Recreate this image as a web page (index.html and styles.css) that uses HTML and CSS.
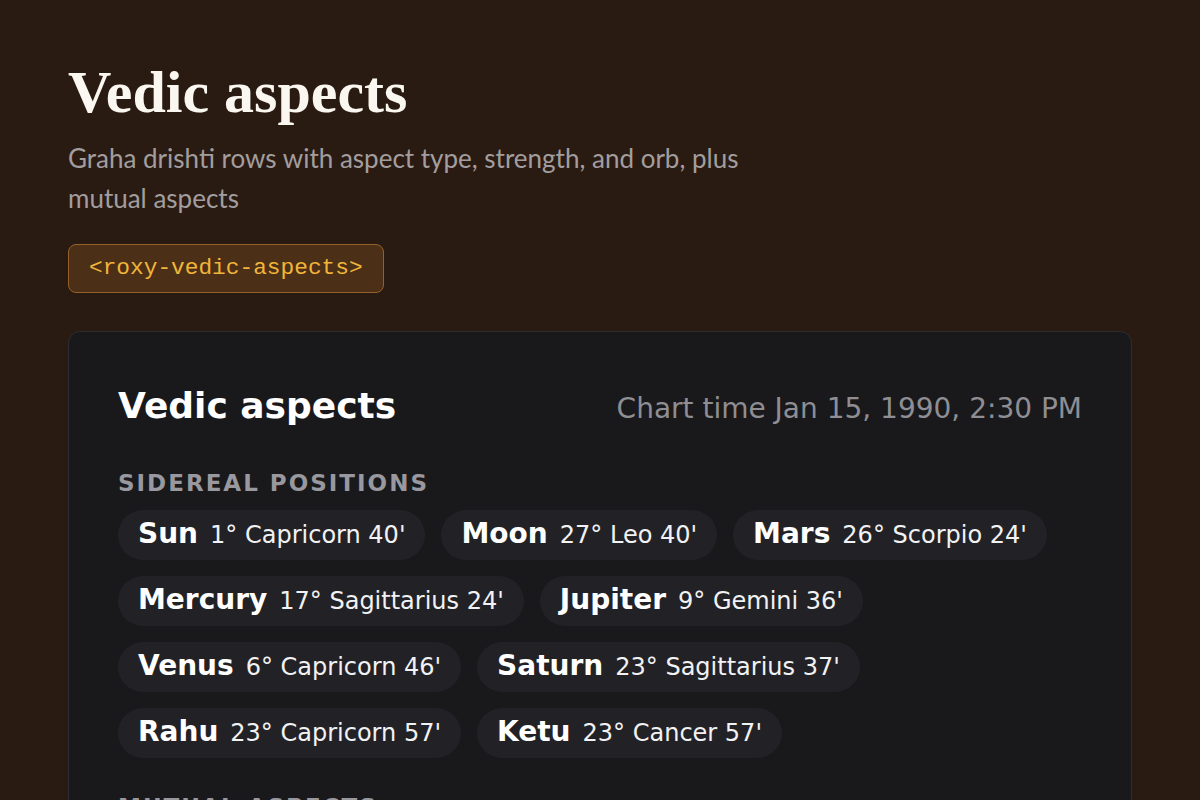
FILE: index.html
```html
<!DOCTYPE html>
<html>
<head>
    <title>Vedic aspects</title>
    <link rel="stylesheet" href="styles.css">
</head>
<body>
    <header class="intro">
        <h1>Vedic aspects</h1>
        <p class="lead">Graha drishti rows with aspect type, strength, and orb, plus mutual aspects</p>
        <code class="tag">&lt;roxy-vedic-aspects&gt;</code>
    </header>

    <section class="panel">
        <div class="panel-head">
            <h2>Vedic aspects</h2>
            <span class="chart-time">Chart time Jan 15, 1990, 2:30 PM</span>
        </div>

        <h3 class="label">Sidereal positions</h3>
        <div class="chips">
            <span class="chip"><b>Sun</b> 1° Capricorn 40'</span>
            <span class="chip"><b>Moon</b> 27° Leo 40'</span>
            <span class="chip"><b>Mars</b> 26° Scorpio 24'</span>
            <span class="chip"><b>Mercury</b> 17° Sagittarius 24'</span>
            <span class="chip"><b>Jupiter</b> 9° Gemini 36'</span>
            <span class="chip"><b>Venus</b> 6° Capricorn 46'</span>
            <span class="chip"><b>Saturn</b> 23° Sagittarius 37'</span>
            <span class="chip"><b>Rahu</b> 23° Capricorn 57'</span>
            <span class="chip"><b>Ketu</b> 23° Cancer 57'</span>
        </div>

        <h3 class="label">Mutual aspects</h3>
    </section>
</body>
</html>
```

FILE: styles.css
```css
body {
    margin: 0;
    padding: 52px 68px 40px;
    background: #2a1b12;
    color: #f4efe8;
    font-family: "DejaVu Sans", sans-serif;
}
.intro {
    margin-bottom: 38px;
}
h1 {
    margin: 0;
    font-family: "Liberation Serif", "DejaVu Serif", serif;
    font-size: 60px;
    font-weight: bold;
    line-height: 80px;
    color: #faf6f0;
}
.lead {
    margin: 6px 0 26px;
    max-width: 720px;
    font-family: Lato, "Open Sans", sans-serif;
    font-size: 26px;
    line-height: 40px;
    color: #a29e9f;
}
.tag {
    display: inline-block;
    padding: 10px 20px;
    background: #4b3017;
    border: 1.5px solid #96602c;
    border-radius: 8px;
    font-family: "Liberation Mono", monospace;
    font-size: 22.8px;
    line-height: 27px;
    color: #f2b53a;
}
.panel {
    background: #19191c;
    border: 1px solid #2d2d31;
    border-radius: 12px;
    padding: 49px 49px 40px;
}
.panel-head {
    display: flex;
    justify-content: space-between;
    align-items: baseline;
    margin-bottom: 39px;
}
h2 {
    margin: 0;
    font-size: 36px;
    font-weight: bold;
    line-height: 50px;
    color: #ffffff;
}
.chart-time {
    font-size: 28px;
    color: #8e8e93;
}
.label {
    margin: 0 0 14px;
    font-size: 23px;
    font-weight: bold;
    letter-spacing: 2px;
    text-transform: uppercase;
    color: #98989e;
}
.chips {
    display: flex;
    flex-wrap: wrap;
    gap: 16px;
    margin-bottom: 36px;
}
.chip {
    display: inline-flex;
    align-items: baseline;
    gap: 12px;
    height: 50px;
    line-height: 48px;
    padding: 0 20px;
    border-radius: 25px;
    background: #222226;
    font-size: 24px;
    color: #f2f2f4;
}
.chip b {
    font-size: 28px;
    color: #ffffff;
}
```
